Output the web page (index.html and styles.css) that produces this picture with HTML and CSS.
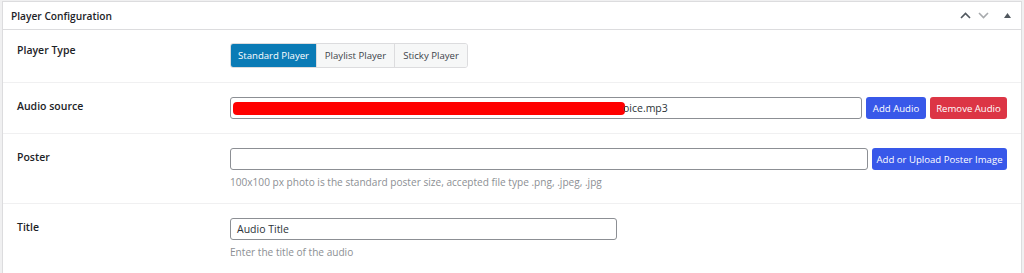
FILE: index.html
```html
<!DOCTYPE html>
<html>
<head>
<meta charset="utf-8">
<link rel="stylesheet" href="styles.css">
</head>
<body>
<div class="panel">
  <div class="panel-head">
    <h2 class="panel-title">Player Configuration</h2>
    <div class="head-actions">
      <svg class="chev chev-up" width="11" height="7" viewBox="0 0 11 7"><path d="M1 6 L5.5 1.5 L10 6" fill="none" stroke="currentColor" stroke-width="1.6"/></svg>
      <svg class="chev chev-down" width="11" height="7" viewBox="0 0 11 7"><path d="M1 1 L5.5 5.5 L10 1" fill="none" stroke="currentColor" stroke-width="1.6"/></svg>
      <svg class="tri" width="7" height="5" viewBox="0 0 7 5"><path d="M0 5 L3.5 0 L7 5 Z" fill="currentColor"/></svg>
    </div>
  </div>

  <div class="row row-first">
    <div class="label">Player Type</div>
    <div class="field">
      <div class="seg">
        <span class="seg-btn active">Standard Player</span>
        <span class="seg-btn seg-playlist">Playlist Player</span>
        <span class="seg-btn seg-sticky">Sticky Player</span>
      </div>
    </div>
  </div>

  <div class="row">
    <div class="label">Audio source</div>
    <div class="field">
      <div class="inline">
        <div class="input input-audio"><span class="redact"></span><span class="val">oice.mp3</span></div>
        <span class="btn btn-blue btn-add">Add Audio</span>
        <span class="btn btn-red btn-remove">Remove Audio</span>
      </div>
    </div>
  </div>

  <div class="row">
    <div class="label">Poster</div>
    <div class="field">
      <div class="inline">
        <div class="input input-poster"></div>
        <span class="btn btn-blue btn-poster">Add or Upload Poster Image</span>
      </div>
      <p class="help">100x100 px photo is the standard poster size, accepted file type .png, .jpeg, .jpg</p>
    </div>
  </div>

  <div class="row">
    <div class="label">Title</div>
    <div class="field">
      <div class="input input-title"><span class="val">Audio Title</span></div>
      <p class="help">Enter the title of the audio</p>
    </div>
  </div>
</div>
</body>
</html>
```

FILE: styles.css
```css
* { box-sizing: border-box; }
html, body { margin: 0; }
body {
  background: #f0f0f1;
  padding: 1px 2px 0 2px;
  font-family: "Open Sans", "Noto Sans", sans-serif;
  color: #1d2327;
  overflow: hidden;
  height: 273px;
}
.panel {
  background: #fff;
  border: 1px solid #dcdcde;
  border-bottom: none;
  height: 300px;
}
.panel-head {
  height: 28px;
  border-bottom: 1px solid #dcdcde;
  display: flex;
  align-items: center;
  justify-content: space-between;
  padding: 0 10px 0 8px;
}
.panel-title {
  margin: 0;
  font-size: 10.2px;
  font-weight: 600;
  color: #1d2327;
}
.head-actions {
  display: flex;
  align-items: center;
  gap: 7px;
}
.chev { display: block; }
.chev-up { color: #50575e; }
.chev-down { color: #a7aaad; margin-right: 8px; }
.tri { color: #50575e; display: block; }

.row {
  display: grid;
  grid-template-columns: 213px 1fr;
  padding: 14px 14px 14px 14px;
  border-bottom: 1px solid #f0f0f1;
}
.row-first { padding-top: 12px; padding-bottom: 14px; }
.label {
  font-size: 10.5px;
  font-weight: 600;
  color: #1d2327;
  padding-top: 2px;
  line-height: 14px;
}
.row-first .label { padding-top: 1px; }
.field { min-width: 0; }

.seg {
  display: inline-flex;
  height: 25px;
  border-radius: 3px;
  border: 1px solid #dcdcde;
  overflow: hidden;
}
.seg-btn {
  display: flex;
  align-items: center;
  justify-content: center;
  font-size: 9.6px;
  color: #3c434a;
  background: #f6f7f7;
  border-left: 1px solid #dcdcde;
  white-space: nowrap;
}
.seg-btn:first-child { border-left: none; }
.seg-btn.active {
  background: #0a7bb6;
  color: #fff;
  width: 85px;
}
.seg-playlist { width: 78px; }
.seg-sticky { width: 73px; }

.inline {
  display: flex;
  gap: 4px;
  align-items: center;
}
.input {
  height: 22px;
  border: 1px solid #8c8f94;
  border-radius: 3px;
  background: #fff;
  display: flex;
  align-items: center;
  padding: 0 6px;
  font-size: 10.5px;
  color: #2c3338;
}
.input-audio { width: 632px; padding-left: 2px; }
.redact {
  width: 392px;
  height: 13px;
  background: #ff0000;
  border-radius: 4px;
  margin-right: -2px;
  flex: none;
}
.input-poster { width: 638px; }
.input-title { width: 387px; }

.btn {
  height: 22px;
  border-radius: 3px;
  color: #fff;
  font-size: 9.6px;
  display: flex;
  align-items: center;
  justify-content: center;
  white-space: nowrap;
}
.btn-blue { background: #3858e9; }
.btn-red { background: #dc3545; }
.btn-add { width: 60px; }
.btn-remove { width: 77px; }
.btn-poster { width: 135px; }

.help {
  margin: 6px 0 0 0;
  font-size: 10.1px;
  color: #8c8f94;
  line-height: 13px;
}
```
